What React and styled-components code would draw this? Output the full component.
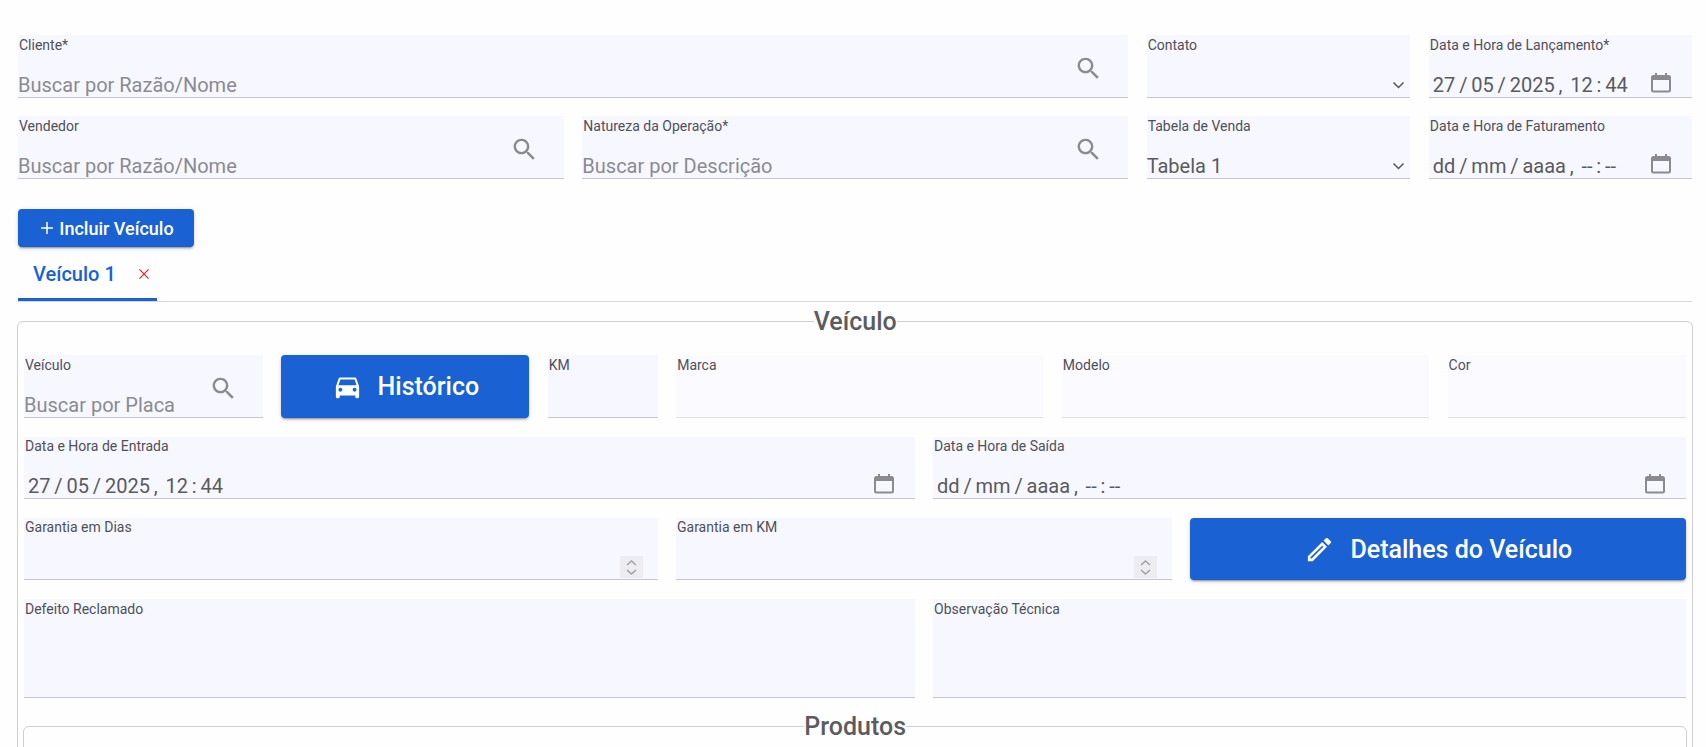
import React from 'react';
import styled, { createGlobalStyle } from 'styled-components';

const Global = createGlobalStyle`
  html, body { margin: 0; height: 100%; overflow: hidden; background: #fefefe; }
  body { font-family: Roboto, "Liberation Sans", sans-serif; color: #55555c; }
  * { box-sizing: border-box; }
`;

const Page = styled.main`
  padding: 35px 13.6px 0 18px;
`;

const TopGrid = styled.section`
  display: grid;
  grid-template-columns: repeat(12, minmax(0, 1fr));
  column-gap: 18.6px;
  row-gap: 18px;
`;

const Row = styled.div`
  display: grid;
  grid-template-columns: ${(p) => p.$cols};
  column-gap: ${(p) => p.$gap || '18px'};
  margin-bottom: 18.7px;
  && > * {
    height: ${(p) => p.$height || '62.5px'};
  }
`;

const FieldBox = styled.div`
  position: relative;
  grid-column: ${(p) => (p.$span ? `span ${p.$span}` : 'auto')};
  height: 63px;
  background: ${(p) => (p.$muted ? '#fbfbff' : '#f7f8ff')};
  border-bottom: 1px solid ${(p) => (p.$muted ? '#dddde2' : '#c6c6cf')};
`;

const Label = styled.label`
  display: block;
  padding: 1.6px 0 0 1px;
  font-size: 14px;
  line-height: 16px;
  font-weight: 400;
  color: #4f4f59;
`;

const Value = styled.div`
  position: absolute;
  left: ${(p) => (p.$date ? '4px' : '0')};
  bottom: 0;
  height: 24px;
  font-size: 20px;
  line-height: 24px;
  white-space: pre;
  word-spacing: ${(p) => (p.$date ? '-1.1px' : '0')};
  color: ${(p) => (p.$placeholder ? '#8a8a92' : '#5a5a61')};
`;

const OverlayIcon = styled.svg`
  position: absolute;
  display: block;
  fill: #8a8a8f;
`;

const SearchGlyph = styled(OverlayIcon)`
  right: 25px;
  top: 19px;
  width: 29px;
  height: 29px;
`;

const ChevronGlyph = styled(OverlayIcon)`
  right: 5px;
  bottom: 8px;
  width: 13px;
  height: 8px;
  fill: none;
  stroke: #55555c;
  stroke-width: 1.5;
`;

const CalendarGlyph = styled(OverlayIcon)`
  right: 20px;
  bottom: 4px;
  width: 22px;
  height: 21px;
`;

const Spinner = styled.div`
  position: absolute;
  right: 15px;
  bottom: 1px;
  width: 23px;
  height: 22px;
  display: flex;
  align-items: center;
  justify-content: center;
  background: #ececf1;
`;

const SpinnerGlyph = styled.svg`
  width: 13px;
  height: 17px;
  fill: none;
  stroke: #a0a0aa;
  stroke-width: 1.5;
`;

const PrimaryButton = styled.button`
  display: flex;
  align-items: center;
  justify-content: center;
  gap: ${(p) => p.$gap || '15px'};
  height: ${(p) => p.$height || '62.5px'};
  padding: 0;
  border: 0;
  border-radius: 4px;
  background: #1a62d3;
  color: #fff;
  font-family: inherit;
  font-size: ${(p) => p.$size || '25px'};
  font-weight: 500;
  box-shadow: 0 3px 1px -2px rgba(0, 0, 0, 0.2), 0 2px 2px rgba(0, 0, 0, 0.14), 0 1px 5px rgba(0, 0, 0, 0.12);
`;

const AddButton = styled(PrimaryButton)`
  width: 176px;
  margin-top: 30px;
  padding-left: 2px;
`;

const ButtonIcon = styled.svg`
  display: block;
  width: 31px;
  height: 31px;
  fill: #fff;
  flex: none;
`;

const PlusIcon = styled.svg`
  display: block;
  width: 14px;
  height: 14px;
  stroke: #fff;
  stroke-width: 1.5;
  fill: none;
`;

const TabBar = styled.nav`
  display: flex;
  height: 55px;
  border-bottom: 1px solid #d8d8dc;
`;

const Tab = styled.div`
  display: flex;
  align-items: center;
  gap: 23px;
  width: 139px;
  height: 54px;
  padding: 3px 0 0 15px;
  border-bottom: 3px solid #1a62d3;
  color: #1a62d3;
  font-size: 20px;
  font-weight: 500;
`;

const CloseIcon = styled.svg`
  display: block;
  width: 10px;
  height: 10px;
  stroke: #f01818;
  stroke-width: 1.2;
  fill: none;
`;

const Panel = styled.fieldset`
  margin: 5px -1px 0;
  padding: 19.4px 6px 0;
  min-width: 0;
  border: 1px solid #cfcfd2;
  border-radius: 6px;
`;

const Legend = styled.legend`
  margin: 0 auto;
  padding: 0;
  font-size: 25px;
  font-weight: 500;
  color: #5c5c60;
`;

const SubPanel = styled.fieldset`
  margin: -4.2px 0 0 -1px;
  padding: 10px;
  width: calc(100% + 2px);
  min-width: 0;
  height: 200px;
  border: 1px solid #cfcfd2;
  border-radius: 6px;
`;

const SearchSvg = () => (
  <SearchGlyph viewBox="0 0 24 24">
    <path d="M15.5 14h-.79l-.28-.27C15.41 12.59 16 11.11 16 9.5 16 5.91 13.09 3 9.5 3S3 5.91 3 9.5 5.91 16 9.5 16c1.61 0 3.09-.59 4.23-1.57l.27.28v.79l5 4.99L20.49 19l-4.99-5zm-6 0C7.01 14 5 11.99 5 9.5S7.01 5 9.5 5 14 7.01 14 9.5 11.99 14 9.5 14z" />
  </SearchGlyph>
);

const ChevronSvg = () => (
  <ChevronGlyph viewBox="0 0 13 8">
    <path d="M1.5 1.5 6.5 6.5 11.5 1.5" />
  </ChevronGlyph>
);

const CalendarSvg = () => (
  <CalendarGlyph viewBox="0 0 22 21">
    <path d="M5 1h2v2h8V1h2v2h1.5A2.5 2.5 0 0 1 21 5.5V18a2.5 2.5 0 0 1-2.5 2.5h-15A2.5 2.5 0 0 1 1 18V5.5A2.5 2.5 0 0 1 3.5 3H5V1zM3 8v10a.5.5 0 0 0 .5.5h15a.5.5 0 0 0 .5-.5V8H3z" />
  </CalendarGlyph>
);

const SpinnerSvg = () => (
  <Spinner>
    <SpinnerGlyph viewBox="0 0 13 17">
      <path d="M2 6 6.5 2 11 6M2 11 6.5 15 11 11" />
    </SpinnerGlyph>
  </Spinner>
);

const Field = ({ label, value, placeholder, date, search, chevron, calendar, spinner, span, muted }) => (
  <FieldBox $span={span} $muted={muted}>
    <Label>{label}</Label>
    {placeholder && <Value $placeholder>{placeholder}</Value>}
    {value && <Value $date={date}>{value}</Value>}
    {search && <SearchSvg />}
    {chevron && <ChevronSvg />}
    {calendar && <CalendarSvg />}
    {spinner && <SpinnerSvg />}
  </FieldBox>
);

const FILLED = '27 / 05 / 2025 ,  12 : 44';
const EMPTY = 'dd / mm / aaaa ,  -- : --';

export default function App() {
  return (
    <Page>
      <Global />
      <TopGrid>
        <Field span={8} label="Cliente*" placeholder="Buscar por Razão/Nome" search />
        <Field span={2} label="Contato" chevron />
        <Field span={2} label="Data e Hora de Lançamento*" value={FILLED} date calendar />
        <Field span={4} label="Vendedor" placeholder="Buscar por Razão/Nome" search />
        <Field span={4} label="Natureza da Operação*" placeholder="Buscar por Descrição" search />
        <Field span={2} label="Tabela de Venda" value="Tabela 1" chevron />
        <Field span={2} label="Data e Hora de Faturamento" value={EMPTY} date calendar />
      </TopGrid>

      <AddButton $height="38px" $size="18px" $gap="5px" type="button">
        <PlusIcon viewBox="0 0 14 14"><path d="M7 1v12M1 7h12" /></PlusIcon>
        Incluir Veículo
      </AddButton>

      <TabBar>
        <Tab>
          Veículo 1
          <CloseIcon viewBox="0 0 11 11"><path d="M.5.5l10 10M10.5.5l-10 10" /></CloseIcon>
        </Tab>
      </TabBar>

      <Panel>
        <Legend>Veículo</Legend>
        <Row $cols="239px 248px 110px 367.3px 367.3px 1fr" $gap="18.4px">
          <Field label="Veículo" placeholder="Buscar por Placa" search />
          <PrimaryButton type="button">
            <ButtonIcon viewBox="0 0 24 24">
              <path d="M18.92 6.01C18.72 5.42 18.16 5 17.5 5h-11c-.66 0-1.21.42-1.42 1.01L3 12v8c0 .55.45 1 1 1h1c.55 0 1-.45 1-1v-1h12v1c0 .55.45 1 1 1h1c.55 0 1-.45 1-1v-8l-2.08-5.99zM6.5 16c-.83 0-1.5-.67-1.5-1.5S5.67 13 6.5 13s1.5.67 1.5 1.5S7.33 16 6.5 16zm11 0c-.83 0-1.5-.67-1.5-1.5s.67-1.5 1.5-1.5 1.5.67 1.5 1.5-.67 1.5-1.5 1.5zM5 11l1.5-4.5h11L19 11H5z" />
            </ButtonIcon>
            Histórico
          </PrimaryButton>
          <Field label="KM" />
          <Field label="Marca" muted />
          <Field label="Modelo" muted />
          <Field label="Cor" muted />
        </Row>
        <Row $cols="891px 1fr">
          <Field label="Data e Hora de Entrada" value={FILLED} date calendar />
          <Field label="Data e Hora de Saída" value={EMPTY} date calendar />
        </Row>
        <Row $cols="634px 1fr 1fr">
          <Field label="Garantia em Dias" spinner />
          <Field label="Garantia em KM" spinner />
          <PrimaryButton type="button">
            <ButtonIcon viewBox="0 0 24 24">
              <path d="M14.06 9.02l.92.92L5.92 19H5v-.92l9.06-9.06M17.66 3c-.25 0-.51.1-.7.29l-1.83 1.83 3.75 3.75 1.83-1.83c.39-.39.39-1.02 0-1.41l-2.34-2.34c-.2-.2-.45-.29-.71-.29zm-3.6 3.19L3 17.25V21h3.75L17.81 9.94l-3.75-3.75z" />
            </ButtonIcon>
            Detalhes do Veículo
          </PrimaryButton>
        </Row>
        <Row $cols="891px 1fr" $height="99px">
          <Field label="Defeito Reclamado" />
          <Field label="Observação Técnica" />
        </Row>
        <SubPanel>
          <Legend>Produtos</Legend>
        </SubPanel>
      </Panel>
    </Page>
  );
}
